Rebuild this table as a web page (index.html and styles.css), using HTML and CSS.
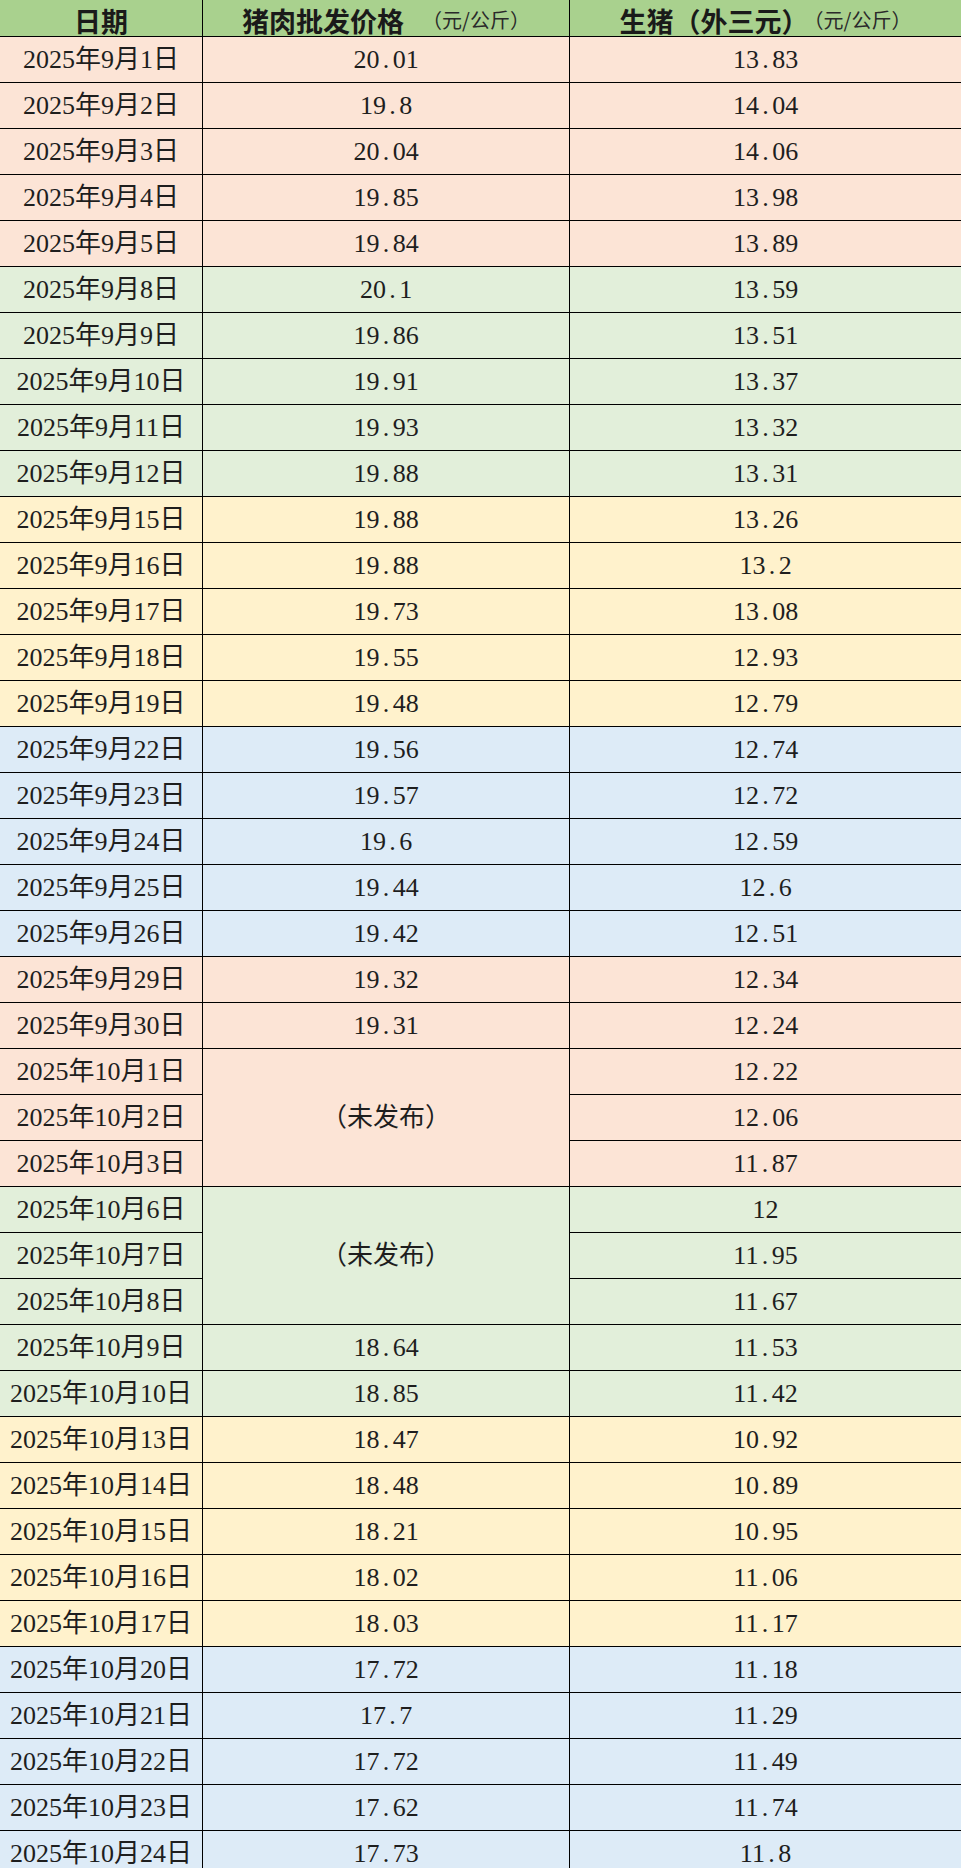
FILE: index.html
```html
<!DOCTYPE html>
<html lang="zh-CN">
<head>
<meta charset="utf-8">
<title>猪肉批发价格</title>
<link rel="stylesheet" href="styles.css">
</head>
<body>
<div class="sheet">
  <div class="row head">
    <div class="c1">日期</div>
    <div class="c2">猪肉批发价格<span class="unit">（元/公斤）</span></div>
    <div class="c3">生猪（外三元）<span class="unit u2">（元/公斤）</span></div>
  </div>

  <div class="row pink"><div class="c1">2025年9月1日</div><div class="c2">20<span class="dot">.</span>01</div><div class="c3">13<span class="dot">.</span>83</div></div>
  <div class="row pink"><div class="c1">2025年9月2日</div><div class="c2">19<span class="dot">.</span>8</div><div class="c3">14<span class="dot">.</span>04</div></div>
  <div class="row pink"><div class="c1">2025年9月3日</div><div class="c2">20<span class="dot">.</span>04</div><div class="c3">14<span class="dot">.</span>06</div></div>
  <div class="row pink"><div class="c1">2025年9月4日</div><div class="c2">19<span class="dot">.</span>85</div><div class="c3">13<span class="dot">.</span>98</div></div>
  <div class="row pink"><div class="c1">2025年9月5日</div><div class="c2">19<span class="dot">.</span>84</div><div class="c3">13<span class="dot">.</span>89</div></div>

  <div class="row green"><div class="c1">2025年9月8日</div><div class="c2">20<span class="dot">.</span>1</div><div class="c3">13<span class="dot">.</span>59</div></div>
  <div class="row green"><div class="c1">2025年9月9日</div><div class="c2">19<span class="dot">.</span>86</div><div class="c3">13<span class="dot">.</span>51</div></div>
  <div class="row green"><div class="c1">2025年9月10日</div><div class="c2">19<span class="dot">.</span>91</div><div class="c3">13<span class="dot">.</span>37</div></div>
  <div class="row green"><div class="c1">2025年9月11日</div><div class="c2">19<span class="dot">.</span>93</div><div class="c3">13<span class="dot">.</span>32</div></div>
  <div class="row green"><div class="c1">2025年9月12日</div><div class="c2">19<span class="dot">.</span>88</div><div class="c3">13<span class="dot">.</span>31</div></div>

  <div class="row yellow"><div class="c1">2025年9月15日</div><div class="c2">19<span class="dot">.</span>88</div><div class="c3">13<span class="dot">.</span>26</div></div>
  <div class="row yellow"><div class="c1">2025年9月16日</div><div class="c2">19<span class="dot">.</span>88</div><div class="c3">13<span class="dot">.</span>2</div></div>
  <div class="row yellow"><div class="c1">2025年9月17日</div><div class="c2">19<span class="dot">.</span>73</div><div class="c3">13<span class="dot">.</span>08</div></div>
  <div class="row yellow"><div class="c1">2025年9月18日</div><div class="c2">19<span class="dot">.</span>55</div><div class="c3">12<span class="dot">.</span>93</div></div>
  <div class="row yellow"><div class="c1">2025年9月19日</div><div class="c2">19<span class="dot">.</span>48</div><div class="c3">12<span class="dot">.</span>79</div></div>

  <div class="row blue"><div class="c1">2025年9月22日</div><div class="c2">19<span class="dot">.</span>56</div><div class="c3">12<span class="dot">.</span>74</div></div>
  <div class="row blue"><div class="c1">2025年9月23日</div><div class="c2">19<span class="dot">.</span>57</div><div class="c3">12<span class="dot">.</span>72</div></div>
  <div class="row blue"><div class="c1">2025年9月24日</div><div class="c2">19<span class="dot">.</span>6</div><div class="c3">12<span class="dot">.</span>59</div></div>
  <div class="row blue"><div class="c1">2025年9月25日</div><div class="c2">19<span class="dot">.</span>44</div><div class="c3">12<span class="dot">.</span>6</div></div>
  <div class="row blue"><div class="c1">2025年9月26日</div><div class="c2">19<span class="dot">.</span>42</div><div class="c3">12<span class="dot">.</span>51</div></div>

  <div class="row pink"><div class="c1">2025年9月29日</div><div class="c2">19<span class="dot">.</span>32</div><div class="c3">12<span class="dot">.</span>34</div></div>
  <div class="row pink"><div class="c1">2025年9月30日</div><div class="c2">19<span class="dot">.</span>31</div><div class="c3">12<span class="dot">.</span>24</div></div>
  <div class="row pink"><div class="c1">2025年10月1日</div><div class="c2 span3">（未发布）</div><div class="c3">12<span class="dot">.</span>22</div></div>
  <div class="row pink"><div class="c1">2025年10月2日</div><div class="c3">12<span class="dot">.</span>06</div></div>
  <div class="row pink"><div class="c1">2025年10月3日</div><div class="c3">11<span class="dot">.</span>87</div></div>

  <div class="row green"><div class="c1">2025年10月6日</div><div class="c2 span3">（未发布）</div><div class="c3">12</div></div>
  <div class="row green"><div class="c1">2025年10月7日</div><div class="c3">11<span class="dot">.</span>95</div></div>
  <div class="row green"><div class="c1">2025年10月8日</div><div class="c3">11<span class="dot">.</span>67</div></div>
  <div class="row green"><div class="c1">2025年10月9日</div><div class="c2">18<span class="dot">.</span>64</div><div class="c3">11<span class="dot">.</span>53</div></div>
  <div class="row green"><div class="c1">2025年10月10日</div><div class="c2">18<span class="dot">.</span>85</div><div class="c3">11<span class="dot">.</span>42</div></div>

  <div class="row yellow"><div class="c1">2025年10月13日</div><div class="c2">18<span class="dot">.</span>47</div><div class="c3">10<span class="dot">.</span>92</div></div>
  <div class="row yellow"><div class="c1">2025年10月14日</div><div class="c2">18<span class="dot">.</span>48</div><div class="c3">10<span class="dot">.</span>89</div></div>
  <div class="row yellow"><div class="c1">2025年10月15日</div><div class="c2">18<span class="dot">.</span>21</div><div class="c3">10<span class="dot">.</span>95</div></div>
  <div class="row yellow"><div class="c1">2025年10月16日</div><div class="c2">18<span class="dot">.</span>02</div><div class="c3">11<span class="dot">.</span>06</div></div>
  <div class="row yellow"><div class="c1">2025年10月17日</div><div class="c2">18<span class="dot">.</span>03</div><div class="c3">11<span class="dot">.</span>17</div></div>

  <div class="row blue"><div class="c1">2025年10月20日</div><div class="c2">17<span class="dot">.</span>72</div><div class="c3">11<span class="dot">.</span>18</div></div>
  <div class="row blue"><div class="c1">2025年10月21日</div><div class="c2">17<span class="dot">.</span>7</div><div class="c3">11<span class="dot">.</span>29</div></div>
  <div class="row blue"><div class="c1">2025年10月22日</div><div class="c2">17<span class="dot">.</span>72</div><div class="c3">11<span class="dot">.</span>49</div></div>
  <div class="row blue"><div class="c1">2025年10月23日</div><div class="c2">17<span class="dot">.</span>62</div><div class="c3">11<span class="dot">.</span>74</div></div>
  <div class="row blue"><div class="c1">2025年10月24日</div><div class="c2">17<span class="dot">.</span>73</div><div class="c3">11<span class="dot">.</span>8</div></div>
</div>
</body>
</html>
```

FILE: styles.css
```css
html, body {
  margin: 0;
  padding: 0;
  background: #ffffff;
}

body {
  font-family: "Liberation Serif", "Noto Sans CJK SC", serif;
  color: #1e1e1e;
  overflow: hidden;
}

.sheet {
  display: grid;
  grid-template-columns: 202px 366px 391px;
  grid-template-rows: 36px;
  grid-auto-rows: 45px;
  gap: 1px;
  background: #000000;
  width: 961px;
}

.row {
  display: contents;
}

.row > div {
  display: flex;
  align-items: center;
  justify-content: center;
  font-size: 26px;
  line-height: 1;
  white-space: nowrap;
}

.c1 { grid-column: 1; }
.c2 { grid-column: 2; }
.c3 { grid-column: 3; }

.span3 {
  grid-row: span 3;
}

.head > div {
  background: #a9d18e;
  font-family: "Noto Sans CJK SC", sans-serif;
  font-weight: 700;
  font-size: 27px;
  line-height: 1;
  color: #1a1a1a;
  padding-top: 4px;
  box-sizing: border-box;
}

.unit {
  font-weight: 400;
  font-size: 20px;
  margin-left: 18px;
  color: #2a2a2a;
}

.unit.u2 {
  margin-left: -5px;
}

.pink > div { background: #fce4d6; }
.green > div { background: #e2efda; }
.yellow > div { background: #fff2cc; }
.blue > div { background: #ddebf7; }

.dot {
  padding: 0 0.13em;
}
```
